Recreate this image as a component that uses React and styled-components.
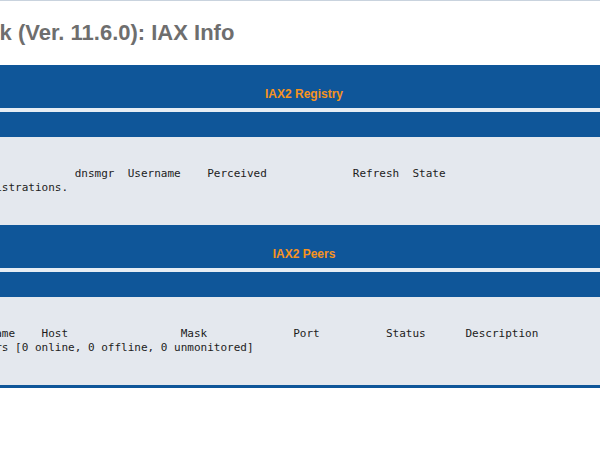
import React from "react";
import styled, { createGlobalStyle } from "styled-components";

const GlobalStyle = createGlobalStyle`
  html, body {
    margin: 0;
    padding: 0;
    background: #ffffff;
    overflow: hidden;
  }
  body {
    font-family: "Liberation Sans", Arial, sans-serif;
  }
`;

const Viewport = styled.div`
  width: 600px;
  height: 458px;
  overflow: hidden;
  border-top: 1px solid #c9d3de;
  box-sizing: border-box;
`;

const Page = styled.div`
  margin-left: -71px;
  width: 750px;
`;

const Title = styled.h1`
  margin: 20px 0 20px -4px;
  font-family: "Liberation Sans", Arial, sans-serif;
  font-size: 22px;
  line-height: 24px;
  font-weight: bold;
  color: #6e6e6e;
  white-space: nowrap;
`;

const Sections = styled.div`
  border-bottom: 3px solid #0f5699;
`;

const HeaderBand = styled.div`
  height: 43px;
  box-sizing: border-box;
  padding-top: 22px;
  background: #0f5699;
  text-align: center;
  font-family: "Liberation Sans", Arial, sans-serif;
  font-size: 12px;
  line-height: 14px;
  font-weight: bold;
  color: #f7931e;
`;

const Divider = styled.div`
  height: 4px;
  background: #e6edf4;
`;

const SubBand = styled.div`
  height: 25px;
  background: #0f5699;
`;

const Content = styled.pre`
  margin: 0;
  padding: 30px 0;
  background: #e4e8ee;
  font-family: "DejaVu Sans Mono", "Liberation Mono", monospace;
  font-size: 11px;
  line-height: 14px;
  color: #1c1c1c;
  white-space: pre;
`;

const Section = ({ title, lines }) => (
  <section>
    <HeaderBand>{title}</HeaderBand>
    <Divider />
    <SubBand />
    <Content>{lines.join("\n")}</Content>
  </section>
);

const registryHeader =
  "Host".padEnd(20) +
  "  " +
  "dnsmgr".padEnd(6) +
  "  " +
  "Username".padEnd(10) +
  "  " +
  "Perceived".padEnd(20) +
  " " +
  "Refresh".padStart(8) +
  "  " +
  "State";

const peersHeader =
  "Name/Username".padEnd(15) +
  "  " +
  "Host".padEnd(15) +
  " " +
  "   " +
  "  " +
  "Mask".padEnd(15) +
  "  " +
  "Port".padEnd(8) +
  "  " +
  "   " +
  " " +
  "Status".padEnd(11) +
  " " +
  "Description";

export default function App() {
  return (
    <>
      <GlobalStyle />
      <Viewport>
        <Page>
          <Title>Asterisk (Ver. 11.6.0): IAX Info</Title>
          <Sections>
            <Section
              title="IAX2 Registry"
              lines={[registryHeader, "0 IAX2 registrations."]}
            />
            <Section
              title="IAX2 Peers"
              lines={[
                peersHeader,
                "0 iax2 peers [0 online, 0 offline, 0 unmonitored]",
              ]}
            />
          </Sections>
        </Page>
      </Viewport>
    </>
  );
}
